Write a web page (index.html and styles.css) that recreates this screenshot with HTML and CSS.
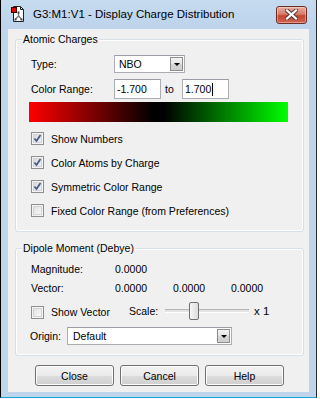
FILE: index.html
```html
<!DOCTYPE html>
<html lang="en">
<head>
<meta charset="UTF-8">
<title>G3:M1:V1 - Display Charge Distribution</title>
<link rel="stylesheet" href="styles.css">
</head>
<body>

<div class="window">
  <div class="titlebar">
    <svg class="app-icon" width="14" height="16" viewBox="0 0 14 16">
      <path d="M2.5 0.5h7l3 3v12h-10z" fill="#fff" stroke="#222"/>
      <path d="M9.5 0.5v3h3" fill="none" stroke="#222"/>
      <rect x="0.5" y="1.5" width="5" height="5" fill="#e00000" stroke="#400"/>
      <path d="M7.5 7v3M7.5 10l-3 3M7.5 10l3 3" stroke="#777" stroke-width="1.4"/>
      <rect x="6.5" y="5.5" width="2" height="2" fill="#444"/>
      <rect x="3.5" y="12.5" width="2" height="2" fill="#444"/>
      <rect x="9.5" y="12.5" width="2" height="2" fill="#444"/>
    </svg>
    <span class="title">G3:M1:V1 - Display Charge Distribution</span>
    <span class="close-btn">
      <svg width="13" height="11" viewBox="0 0 13 11">
        <path d="M2 1.5l9 8M11 1.5l-9 8" stroke="#5b3b38" stroke-width="4.2" stroke-linecap="square"/>
        <path d="M2 1.5l9 8M11 1.5l-9 8" stroke="#fff" stroke-width="2.2" stroke-linecap="square"/>
      </svg>
    </span>
  </div>

  <div class="client">
    <div class="group group-charges">
      <span class="group-title">Atomic Charges</span>

      <div class="row row-type">
        <span class="label">Type:</span>
        <div class="combo combo-type">
          <span class="combo-text">NBO</span>
          <span class="combo-btn"><i class="arrow"></i></span>
        </div>
      </div>

      <div class="row row-range">
        <span class="label">Color Range:</span>
        <div class="textbox">-1.700</div>
        <span class="to">to</span>
        <div class="textbox">1.700<span class="caret"></span></div>
      </div>

      <div class="color-bar"></div>

      <div class="checks">
        <label class="check"><span class="box checked"></span>Show Numbers</label>
        <label class="check"><span class="box checked"></span>Color Atoms by Charge</label>
        <label class="check"><span class="box checked"></span>Symmetric Color Range</label>
        <label class="check"><span class="box"></span>Fixed Color Range (from Preferences)</label>
      </div>
    </div>

    <div class="group group-dipole">
      <span class="group-title">Dipole Moment (Debye)</span>

      <div class="row row-value">
        <span class="label">Magnitude:</span>
        <span class="num">0.0000</span>
      </div>
      <div class="row row-value row-vector">
        <span class="label">Vector:</span>
        <span class="num">0.0000</span>
        <span class="num">0.0000</span>
        <span class="num">0.0000</span>
      </div>

      <div class="row row-show">
        <label class="check check-vector"><span class="box"></span>Show Vector</label>
        <span class="scale-label">Scale:</span>
        <div class="slider">
          <div class="track"></div>
          <div class="thumb"></div>
        </div>
        <span class="scale-value">x 1</span>
      </div>

      <div class="row row-origin">
        <span class="origin-label">Origin:</span>
        <div class="combo combo-origin">
          <span class="combo-text">Default</span>
          <span class="combo-btn"><i class="arrow"></i></span>
        </div>
      </div>
    </div>

    <div class="buttons">
      <button class="btn">Close</button>
      <button class="btn">Cancel</button>
      <button class="btn">Help</button>
    </div>
  </div>
</div>

</body>
</html>
```

FILE: styles.css
```css
html, body {
  margin: 0;
  background: #fff;
}
body {
  width: 320px;
  height: 399px;
  overflow: hidden;
  font-family: "Liberation Sans", Arial, sans-serif;
  font-size: 10.5px;
  color: #000;
}

.window {
  width: 317px;
  height: 398px;
  box-sizing: border-box;
  border-left: 1px solid #000;
  border-right: 1px solid #2a2a2a;
  border-bottom: 1px solid #1ba3e0;
  background: #bfd5ec;
  padding: 0 7px 5px 7px;
  display: flex;
  flex-direction: column;
}

/* title bar */
.titlebar {
  height: 29px;
  flex: none;
  display: flex;
  align-items: center;
  background: linear-gradient(#c6dbef, #bcd3eb);
  margin: 0 -7px;
  padding: 0 9px 0 10px;
}
.app-icon {
  flex: none;
  margin-top: -1px;
}
.title {
  margin-left: 8px;
  font-size: 11.5px;
  color: #000;
  margin-top: -1px;
}
.close-btn {
  margin-left: auto;
  width: 29px;
  height: 16px;
  border: 1px solid #6e2b23;
  border-radius: 3px;
  background: linear-gradient(#e9ada0, #d77c6b 45%, #c5452f 55%, #cf6551);
  box-shadow: inset 0 0 0 1px rgba(255, 255, 255, 0.35);
  display: flex;
  align-items: center;
  justify-content: center;
}

/* client area */
.client {
  flex: 1;
  background: #f0f0f0;
  padding: 10px 5px 0 7px;
  display: flex;
  flex-direction: column;
}

.group {
  position: relative;
  box-sizing: border-box;
  flex: none;
  border: 1px solid #d5dfe5;
  border-radius: 3px;
  box-shadow: inset 0 0 0 1px #fff;
  padding: 0 0 0 15px;
}
.group-title {
  position: absolute;
  top: -8px;
  left: 6px;
  padding: 0 1px;
  background: #f0f0f0;
  line-height: 14px;
}
.group-charges {
  height: 193px;
  padding-top: 15px;
}
.group-dipole {
  margin-top: 16px;
  height: 108px;
  padding-top: 13px;
}

.row {
  display: flex;
  align-items: center;
}
.label {
  width: 83px;
  flex: none;
}

/* combo boxes */
.combo {
  box-sizing: border-box;
  height: 18px;
  border: 1px solid #abadb3;
  border-top-color: #9a9da5;
  background: #fff;
  display: flex;
  align-items: center;
  padding: 0 1px 0 4px;
}
.combo-text {
  flex: 1;
}
.combo-btn {
  width: 13px;
  height: 14px;
  box-sizing: border-box;
  border: 1px solid #8d8d8d;
  background: linear-gradient(#f3f3f3, #e3e3e3 50%, #d5d5d5 51%, #cfcfcf);
  display: flex;
  align-items: center;
  justify-content: center;
}
.arrow {
  width: 0;
  height: 0;
  border-left: 3px solid transparent;
  border-right: 3px solid transparent;
  border-top: 3px solid #000;
  margin-top: 1px;
}
.combo-type {
  width: 71px;
}

/* text boxes */
.row-range {
  margin-top: 6px;
}
.textbox {
  box-sizing: border-box;
  width: 47px;
  height: 20px;
  border: 1px solid #abadb3;
  border-top-color: #9a9da5;
  background: #fff;
  padding: 0 2px;
  display: flex;
  align-items: center;
}
.to {
  margin: 0 6px 0 4px;
  width: 11px;
}
.caret {
  display: inline-block;
  width: 1px;
  height: 13px;
  background: #000;
  margin-left: 1px;
}

.color-bar {
  margin: 3px 0 0 -2px;
  width: 259px;
  height: 20px;
  flex: none;
  background: linear-gradient(to right, #ff0000, #000 48%, #000 52%, #00ff00);
}

/* check boxes */
.checks {
  margin-top: 10px;
  display: flex;
  flex-direction: column;
  gap: 11px;
}
.check {
  display: flex;
  align-items: center;
  height: 13px;
  white-space: nowrap;
}
.box {
  box-sizing: border-box;
  width: 13px;
  height: 13px;
  flex: none;
  margin-right: 7px;
  border: 1px solid #8e8f8f;
  background: linear-gradient(135deg, #dcdcdc, #fefefe);
  box-shadow: inset 0 0 0 1px #f4f4f4, inset 0 0 0 2px #d3d3d3;
}
.box.checked {
  background:
    url("data:image/svg+xml,%3Csvg xmlns='http://www.w3.org/2000/svg' width='11' height='11'%3E%3Cpath d='M2.5 5.5l2 2.5 4-6' fill='none' stroke='%23475a86' stroke-width='1.7'/%3E%3C/svg%3E") center/11px 11px no-repeat,
    linear-gradient(135deg, #d4d4d4, #f6f6f6);
}

/* dipole section */
.row-value .label {
  width: 84px;
}
.row-value {
  height: 14px;
}
.row-vector {
  margin-top: 5px;
}
.num {
  width: 58px;
  flex: none;
}
.row-show {
  margin-top: 7px;
  height: 18px;
}
.check-vector {
  width: 98px;
  flex: none;
  margin-top: 2px;
}
.scale-label {
  width: 36px;
  flex: none;
}
.slider {
  position: relative;
  width: 84px;
  height: 18px;
  flex: none;
  display: flex;
  align-items: center;
}
.track {
  width: 100%;
  height: 2px;
  border-top: 1px solid #b4b4b4;
  border-bottom: 1px solid #fff;
  background: #e3e3e3;
}
.thumb {
  position: absolute;
  left: 24px;
  top: 0;
  box-sizing: border-box;
  width: 10px;
  height: 18px;
  border: 1px solid #707070;
  border-radius: 2px;
  background: linear-gradient(to right, #f6f6f6, #dcdcdc);
}
.scale-value {
  margin-left: 5px;
  font-size: 11.5px;
}

.row-origin {
  margin-top: 7px;
}
.origin-label {
  width: 37px;
  margin-left: -1px;
  flex: none;
}
.combo-origin {
  width: 165px;
  padding-left: 5px;
}

/* dialog buttons */
.buttons {
  display: flex;
  gap: 6px;
  margin: 9px 0 0 20px;
}
.btn {
  box-sizing: border-box;
  width: 79px;
  height: 21px;
  border: 1px solid #707070;
  border-radius: 3px;
  background: linear-gradient(#f2f2f2, #ebebeb 50%, #dddddd 51%, #cfcfcf);
  box-shadow: inset 0 0 0 1px #fcfcfc;
  font-family: "Liberation Sans", Arial, sans-serif;
  font-size: 10.5px;
  color: #000;
  padding: 0;
}
```
